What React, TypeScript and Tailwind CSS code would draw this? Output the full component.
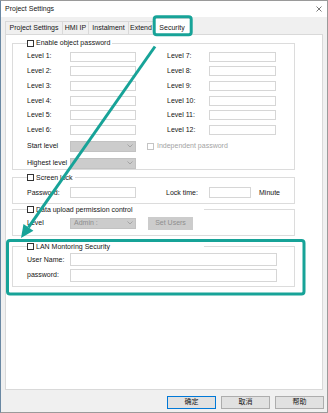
import React from 'react';

const FONT = "font-['Liberation_Sans','Noto_Sans_CJK_SC',sans-serif]";
const TEAL = '#17a398';

function CheckBox({ disabled = false }: { disabled?: boolean }) {
  return (
    <span
      className={`block w-[7px] h-[7px] shrink-0 border bg-white ${
        disabled ? 'border-[#c4c4c4]' : 'border-[#333333]'
      }`}
    />
  );
}

function TextBox({ className }: { className: string }) {
  return <div className={`shrink-0 border border-[#d6d6d6] bg-white ${className}`} />;
}

function Combo({ text = '' }: { text?: string }) {
  return (
    <div className="w-[66px] h-[11px] shrink-0 bg-[#cccccc] border border-[#c2c2c2] flex items-center justify-between pl-[3px] pr-[2px] text-[#8c8c8c]">
      <span>{text}</span>
      <svg width="6" height="4" viewBox="0 0 6 4">
        <polyline points="0.5,0.5 3,3 5.5,0.5" fill="none" stroke="#9a9a9a" strokeWidth="0.8" />
      </svg>
    </div>
  );
}

function Label({ children, className = 'w-[43px]' }: { children: React.ReactNode; className?: string }) {
  return <span className={`shrink-0 whitespace-nowrap ${className}`}>{children}</span>;
}

interface GroupProps {
  title: string;
  legendClass?: string;
  className: string;
  children: React.ReactNode;
}

// group box with a checkbox in its caption
function Group({ title, legendClass = '', className, children }: GroupProps) {
  return (
    <fieldset className={`ml-[6px] w-[283px] border border-[#dcdcdc] ${className}`}>
      <legend className={`ml-[14px] h-[10px] flex items-center gap-[2px] pr-[2px] whitespace-nowrap ${legendClass}`}>
        <CheckBox />
        <span>{title}</span>
      </legend>
      {children}
    </fieldset>
  );
}

function Tab({ w, children }: { w: string; children: React.ReactNode }) {
  return (
    <div className={`h-[13px] shrink-0 border-l border-t border-[#d9d9d9] bg-[#f0f0f0] flex items-center justify-center whitespace-nowrap overflow-hidden ${w}`}>
      {children}
    </div>
  );
}

export default function App() {
  const levels = [1, 2, 3, 4, 5, 6];

  return (
    <div
      className={`${FONT} text-[7px] text-[#151515] relative w-[328px] h-[413px] bg-[#f0f0f0] border border-[#9a9a9a] border-l-[#6a88a3] flex flex-col overflow-hidden`}
    >
      {/* Title bar */}
      <div className="h-[16px] shrink-0 bg-white flex items-center justify-between pl-[4px] pr-[5px]">
        <span>Project Settings</span>
        <svg width="6" height="6" viewBox="0 0 6 6">
          <path d="M0.5 0.5 L5.5 5.5 M5.5 0.5 L0.5 5.5" stroke="#555" strokeWidth="0.8" />
        </svg>
      </div>

      {/* Tabs */}
      <div className="h-[17px] shrink-0 flex items-end pl-[4px] relative z-10">
        <Tab w="w-[57px]">Project Settings</Tab>
        <Tab w="w-[26px]">HMI IP</Tab>
        <Tab w="w-[40px]">Instalment</Tab>
        <Tab w="w-[25px]">Extend</Tab>
        <div className="h-[17px] -mb-px w-[38px] shrink-0 bg-white border border-b-0 border-[#d9d9d9] flex items-center justify-center pt-[2px]">
          Security
        </div>
      </div>

      {/* Tab page */}
      <div className="ml-[4px] w-[318px] h-[356px] shrink-0 bg-white border border-[#d9d9d9] flex flex-col">
        <Group title="Enable object password" className="mt-[3px] pb-[0.5px]">
          <div className="pt-[1.4px] pl-[14px] flex flex-col">
            {levels.map((i) => (
              <div key={i} className="h-[14.7px] flex items-center">
                <Label>Level {i}:</Label>
                <TextBox className="w-[66px] h-[10px]" />
                <Label className="ml-[31px] w-[42px]">Level {i + 6}:</Label>
                <TextBox className="w-[67px] h-[10px]" />
              </div>
            ))}
            <div className="mt-[3.45px] h-[11px] flex items-center">
              <Label>Start level</Label>
              <Combo />
              <span className="ml-[11px] flex items-center gap-[3px] text-[#a3a3a3] whitespace-nowrap">
                <CheckBox disabled />
                Independent password
              </span>
            </div>
            <div className="mt-[6px] h-[11px] flex items-center">
              <Label>Highest level</Label>
              <Combo />
            </div>
          </div>
        </Group>

        <Group title="Screen lock" className="mt-[2.5px] pb-[4.4px]">
          <div className="mt-[4.3px] pl-[14px] h-[11px] flex items-center">
            <Label>Password:</Label>
            <TextBox className="w-[66px] h-[11px]" />
            <Label className="ml-[30px] w-[43px]">Lock time:</Label>
            <TextBox className="w-[42px] h-[11px]" />
            <Label className="ml-[8px]">Minute</Label>
          </div>
        </Group>

        <Group title="Data upload permission control" legendClass="w-[177px]" className="mt-[1.3px] pb-[5px]">
          <div className="mt-[2px] pl-[14px] h-[13px] flex items-center">
            <Label>Level</Label>
            <Combo text="Admin :" />
            <div className="ml-[12px] w-[45px] h-[13px] bg-[#cccccc] text-[#8e8e8e] flex items-center justify-center">
              Set Users
            </div>
          </div>
        </Group>

        <Group title="LAN Montoring Security" legendClass="w-[177px]" className="mt-[6px] pb-[4px]">
          <div className="pl-[14px] flex flex-col">
            <div className="mt-[1.5px] h-[13px] flex items-center">
              <Label>User Name:</Label>
              <TextBox className="w-[207px] h-[13px]" />
            </div>
            <div className="mt-[2.5px] h-[13px] flex items-center">
              <Label>password:</Label>
              <TextBox className="w-[207px] h-[13px]" />
            </div>
          </div>
        </Group>
      </div>

      {/* Dialog buttons */}
      <div className="mt-[6px] flex justify-end gap-[5px] pr-[3px]">
        <div className="w-[49px] h-[13px] bg-[#e1e1e1] border border-[#0078d7] flex items-center justify-center">确定</div>
        <div className="w-[49px] h-[13px] bg-[#e1e1e1] border border-[#adadad] flex items-center justify-center">取消</div>
        <div className="w-[49px] h-[13px] bg-[#e1e1e1] border border-[#adadad] flex items-center justify-center">帮助</div>
      </div>

      {/* Annotation overlay */}
      <svg
        className="absolute -left-px -top-px z-20 pointer-events-none"
        width="328"
        height="413"
        viewBox="0 0 328 413"
      >
        <rect x="154.2" y="16.8" width="37" height="18" rx="2.5" fill="none" stroke={TEAL} strokeWidth="3" />
        <rect x="7.5" y="240.5" width="296.5" height="53.5" rx="2.5" fill="none" stroke={TEAL} strokeWidth="3" />
        <line x1="155" y1="46.5" x2="28.45" y2="227.35" stroke={TEAL} strokeWidth="3" />
        <polygon points="21,238 33.4,230.8 23.5,223.9" fill={TEAL} />
      </svg>
    </div>
  );
}
